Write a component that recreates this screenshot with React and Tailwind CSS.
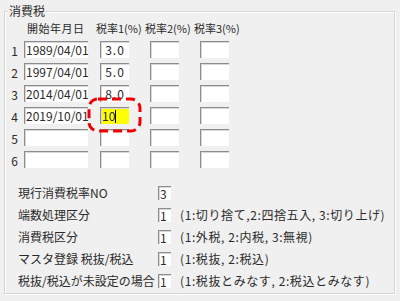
import React from "react";

const font = { fontFamily: '"Noto Sans CJK JP", "Liberation Sans", sans-serif' };

function Box({ w, value, center, yellow, caret }) {
  return (
    <div
      className={`h-[17px] border-t border-l border-[#8c8c8c] shadow-[inset_1px_1px_0_#d8d8d8] flex items-center text-[12px] leading-none text-[#2a2a2a] ${yellow ? "bg-[#ffff00]" : "bg-white"} ${center ? "justify-center tracking-[1px]" : "pl-[1px]"}`}
      style={{ width: w }}
    >
      {value}
      {caret ? <span className="inline-block w-px h-[13px] bg-black" /> : null}
    </div>
  );
}

const rows = [
  ["1", "1989/04/01", "3.0"],
  ["2", "1997/04/01", "5.0"],
  ["3", "2014/04/01", "8.0"],
  ["4", "2019/10/01", "10"],
  ["5", "", ""],
  ["6", "", ""],
];

const settings = [
  ["現行消費税率NO", "3", ""],
  ["端数処理区分", "1", "(1:切り捨て,2:四捨五入, 3:切り上げ)"],
  ["消費税区分", "1", "(1:外税, 2:内税, 3:無視)"],
  ["マスタ登録 税抜/税込", "1", "(1:税抜, 2:税込)"],
  ["税抜/税込が未設定の場合", "1", "(1:税抜とみなす, 2:税込とみなす)"],
];

export default function App() {
  return (
    <div className="relative w-[400px] h-[301px] bg-[#f0f0f0] overflow-hidden text-[#2a2a2a]" style={font}>
      <div className="pt-[11px] pl-[4px]">
        <div className="relative w-[391px] h-[283px] border border-[#d5d5d5] shadow-[1px_1px_0_#ffffff,inset_1px_1px_0_#ffffff]">
          <span className="absolute left-[3px] top-[-8px] px-[1px] bg-[#f0f0f0] text-[12px] leading-[14px]">
            消費税
          </span>

          {/* header */}
          <div className="flex pt-[9px] text-[11px] leading-[14px] whitespace-nowrap">
            <span className="ml-[22px] w-[69px] tracking-[0.5px]">開始年月日</span>
            <span className="w-[49px]">税率1(%)</span>
            <span className="w-[49px]">税率2(%)</span>
            <span>税率3(%)</span>
          </div>

          {/* rate rows */}
          <div className="flex flex-col gap-[5px] mt-[6px]">
            {rows.map(([n, date, rate], i) => (
              <div key={n} className="flex items-center">
                <span className="w-[19px] text-center text-[12px] leading-none pt-[3px]">{n}</span>
                <Box w={64} value={date} />
                <div className="ml-[12px]">
                  {i === 3 ? (
                    <Box w={29} value="10" yellow caret />
                  ) : (
                    <Box w={29} value={rate} center />
                  )}
                </div>
                <div className="ml-[21px]">
                  <Box w={29} value="" />
                </div>
                <div className="ml-[21px]">
                  <Box w={29} value="" />
                </div>
              </div>
            ))}
          </div>

          {/* settings */}
          <div className="flex flex-col mt-[14px]">
            {settings.map(([label, val, desc]) => (
              <div key={label} className="flex items-center h-[22px] text-[12px] whitespace-nowrap">
                <span className="ml-[13px] w-[140px]">{label}</span>
                <div className="w-[13px] h-[14px] bg-white border-t border-l border-[#8c8c8c] shadow-[inset_1px_1px_0_#d8d8d8] text-[12px] leading-[13px] pl-[1px]">
                  {val}
                </div>
                <span className="ml-[9px] tracking-[0.6px]">{desc}</span>
              </div>
            ))}
          </div>
        </div>
      </div>

      <svg className="absolute left-[87px] top-[97px]" width="55" height="36" viewBox="0 0 55 36">
        <rect
          x="2"
          y="2"
          width="51"
          height="32"
          rx="9"
          ry="9"
          fill="none"
          stroke="#ee0000"
          strokeWidth="3"
          strokeDasharray="9 5"
        />
      </svg>
    </div>
  );
}
